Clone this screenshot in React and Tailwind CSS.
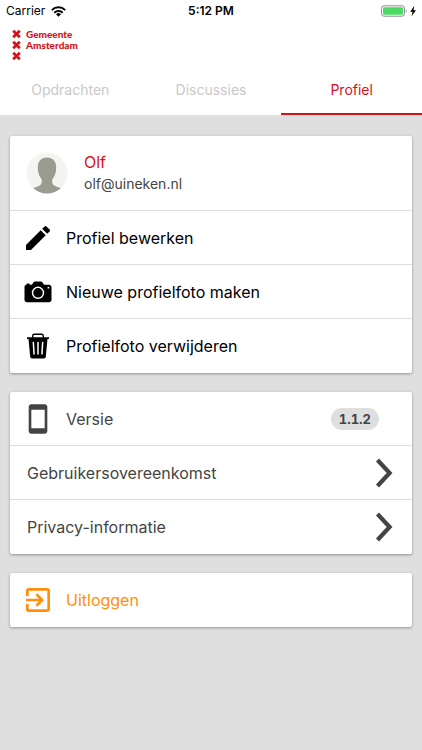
import React from 'react';

function StatusBar() {
  return (
    <div className="grid h-[22px] grid-cols-3 items-center px-[6px] text-[12px] leading-[22px] text-black">
      <div className="flex items-center gap-[6px]">
        <span>Carrier</span>
        <svg className="h-[11px] w-[15px]" viewBox="0 0 15 11" aria-hidden="true">
          <g fill="none" stroke="#000" strokeWidth="2">
            <path d="M.8 4.1a9.5 9.5 0 0 1 13.4 0" />
            <path d="M3.3 6.7a6 6 0 0 1 8.4 0" />
          </g>
          <path d="M7.5 10.8 5 8.3a3.6 3.6 0 0 1 5 0z" />
        </svg>
      </div>
      <span className="text-center font-semibold">5:12 PM</span>
      <svg className="h-[12px] w-[35px] justify-self-end" viewBox="0 0 35 12" aria-hidden="true">
        <rect x=".5" y=".8" width="23" height="10.4" rx="2.5" fill="#fff" stroke="#8c8c8c" />
        <rect x="2" y="2.3" width="20" height="7.4" rx="1.2" fill="#4cd964" />
        <path d="M24.8 4.2c1.3.5 1.3 3.1 0 3.6z" fill="#8c8c8c" />
        <path d="M33.3.8 29.2 6.700h2.400l-1 4.600 4.400-6.100h-2.500z" fill="#000" />
      </svg>
    </div>
  );
}

function Cross({ y }) {
  return <path d={`M1.200 ${y + 1.2}l6.600 6.600M7.800 ${y + 1.2}l-6.600 6.600`} />;
}

function Logo() {
  return (
    <div className="flex h-[44px] gap-[5px] pt-[7px] pl-[12px]">
      <svg className="h-[33px] w-[9px]" viewBox="0 0 9 33" aria-hidden="true">
        <g stroke="#d8121a" strokeWidth="2.800" fill="none">
          <Cross y={0.5} />
          <Cross y={11.5} />
          <Cross y={22.5} />
        </g>
      </svg>
      <div className="font-[Lato,sans-serif] text-[10px] leading-[11px] font-black text-[#d8121a]">
        <div>Gemeente</div>
        <div>Amsterdam</div>
      </div>
    </div>
  );
}

function Tab({ children, active }) {
  return (
    <button
      type="button"
      role="tab"
      aria-selected={!!active}
      className={
        'h-[49px] border-b-2 text-[14px] ' +
        (active ? 'border-[#d8121a] text-[#d8121a]' : 'border-white text-[#c9c9c9]')
      }
    >
      {children}
    </button>
  );
}

const rowBase = 'flex h-[54px] w-full items-center gap-[12px] px-[12px] text-left text-[16px]';

function Card({ children }) {
  return (
    <section className="divide-y divide-[#dedede] rounded-[2px] bg-white shadow-[0_1px_3px_rgba(0,0,0,0.35)]">
      {children}
    </section>
  );
}

function Avatar() {
  return (
    <svg className="size-[42px]" viewBox="0 0 42 42" role="img" aria-label="Profielfoto">
      <defs>
        <clipPath id="avatar-circle">
          <circle cx="21" cy="21" r="20.500" />
        </clipPath>
      </defs>
      <circle cx="21" cy="21" r="20.500" fill="#f4f5f1" />
      <path
        clipPath="url(#avatar-circle)"
        fill="#9a9c91"
        d="M21 5.500c-5.800 0-9.400 4-9.200 10.500.1 4.500 1.400 8.500 3.900 11.200.5 3.300-.2 5.600-3 6.900-2.200 1-4.300 1.400-5.700 2.400V42h28v-5.500c-1.400-1-3.500-1.400-5.700-2.400-2.800-1.300-3.500-3.600-3-6.900 2.500-2.700 3.800-6.700 3.900-11.200.2-6.500-3.400-10.500-9.200-10.500z"
      />
    </svg>
  );
}

function PencilIcon() {
  return (
    <svg className="size-[32px]" viewBox="0 0 24 24" aria-hidden="true">
      <path d="M3 17.250V21h3.750L17.810 9.940l-3.750-3.750L3 17.250zM20.710 7.040a1 1 0 0 0 0-1.410l-2.340-2.340a1 1 0 0 0-1.410 0l-1.830 1.830 3.750 3.750 1.830-1.830z" />
    </svg>
  );
}

function CameraIcon() {
  return (
    <svg className="size-[32px]" viewBox="0 0 32 32" aria-hidden="true">
      <path d="M4.500 8.800v-.6c0-.4.300-.7.700-.7h1.800c.4 0 .7.300.7.700v.6h1.500c1.600 0 2-3.300 3.600-3.300h6.400c1.600 0 2 3.300 3.600 3.300h4.200c1.400 0 2.500 1 2.500 2.400v12.600c0 1.300-1.100 2.400-2.500 2.400H5c-1.400 0-2.500-1.100-2.500-2.400V11.200c0-1.300.7-2.200 2-2.400z" />
      <circle cx="16" cy="16.800" r="5.500" fill="none" stroke="#fff" strokeWidth="1.400" />
      <circle cx="26.400" cy="11.700" r=".9" fill="#fff" />
    </svg>
  );
}

function TrashIcon() {
  return (
    <svg className="size-[32px]" viewBox="0 0 32 32" aria-hidden="true">
      <path d="M10.700 8V6c0-1 .7-1.700 1.700-1.700h7.200c1 0 1.700.7 1.700 1.700v2" fill="none" stroke="#000" strokeWidth="1.400" />
      <path d="M5 7.300h22v1.600h-1.500l-1.700 17.800c-.1 1-.9 1.700-1.800 1.700H10c-1 0-1.700-.7-1.800-1.700L6.500 8.900H5z" />
      <path d="m11.300 11.900.8 12.600M16 11.900v12.600M20.700 11.900l-.8 12.600" stroke="#fff" strokeWidth="1.500" />
    </svg>
  );
}

function PhoneIcon() {
  return (
    <svg className="size-[32px]" viewBox="0 0 24 24" fill="#444" aria-hidden="true">
      <path d="M17 1.010 7 1c-1.100 0-1.990.9-1.990 2v18c0 1.100.89 2 1.990 2h10c1.100 0 2-.9 2-2V3c0-1.100-.9-1.990-2-1.990zM17 19H7V5h10v14z" />
    </svg>
  );
}

function ExitIcon() {
  return (
    <svg className="size-[32px]" viewBox="0 0 24 24" fill="#ff8f0a" aria-hidden="true">
      <path d="M10.090 15.590 11.500 17l5-5-5-5-1.410 1.410L12.670 11H3v2h9.670l-2.580 2.590zM19 3H5a2 2 0 0 0-2 2v4h2V5h14v14H5v-4H3v4a2 2 0 0 0 2 2h14c1.100 0 2-.9 2-2V5c0-1.100-.9-2-2-2z" />
    </svg>
  );
}

function ChevronIcon() {
  return (
    <svg className="h-[30px] w-[18px]" viewBox="0 0 18 30" aria-hidden="true">
      <path d="M2.500 2 14.600 15 2.500 28" fill="none" stroke="#444" strokeWidth="4.200" />
    </svg>
  );
}

function ActionRow({ icon, children, tone = 'text-black' }) {
  return (
    <button type="button" className={`${rowBase} ${tone}`}>
      {icon}
      <span>{children}</span>
    </button>
  );
}

function LinkRow({ children }) {
  return (
    <a href="#" className="flex h-[54px] items-center justify-between pr-[19px] pl-[17px] text-[16px] text-[#444]">
      <span>{children}</span>
      <ChevronIcon />
    </a>
  );
}

export default function App() {
  return (
    <div className="min-h-screen bg-[#dfdfdf] font-[Inter,'Liberation_Sans',sans-serif]">
      <header className="bg-white">
        <StatusBar />
        <Logo />
        <nav role="tablist" className="grid grid-cols-3">
          <Tab>Opdrachten</Tab>
          <Tab>Discussies</Tab>
          <Tab active>Profiel</Tab>
        </nav>
      </header>
      <main className="flex flex-col gap-[19px] px-[10px] pt-[21px] pb-[20px]">
        <Card>
          <div className="flex h-[75px] items-center gap-[16px] pl-[16px]">
            <Avatar />
            <div>
              <h1 className="text-[16px] leading-[22px] text-[#d8121a]">Olf</h1>
              <p className="text-[14px] leading-[22px] text-[#444]">olf@uineken.nl</p>
            </div>
          </div>
          <ActionRow icon={<PencilIcon />}>Profiel bewerken</ActionRow>
          <ActionRow icon={<CameraIcon />}>Nieuwe profielfoto maken</ActionRow>
          <ActionRow icon={<TrashIcon />}>Profielfoto verwijderen</ActionRow>
        </Card>
        <Card>
          <div className={`${rowBase} text-[#444]`}>
            <PhoneIcon />
            <span className="grow">Versie</span>
            <span className="mr-[21px] rounded-full bg-[#dfdfdf] px-[8px] text-[13px] leading-[22px] font-bold tabular-nums">1.1.2</span>
          </div>
          <LinkRow>Gebruikersovereenkomst</LinkRow>
          <LinkRow>Privacy-informatie</LinkRow>
        </Card>
        <Card>
          <ActionRow icon={<ExitIcon />} tone="text-[#ff8f0a]">Uitloggen</ActionRow>
        </Card>
      </main>
    </div>
  );
}
